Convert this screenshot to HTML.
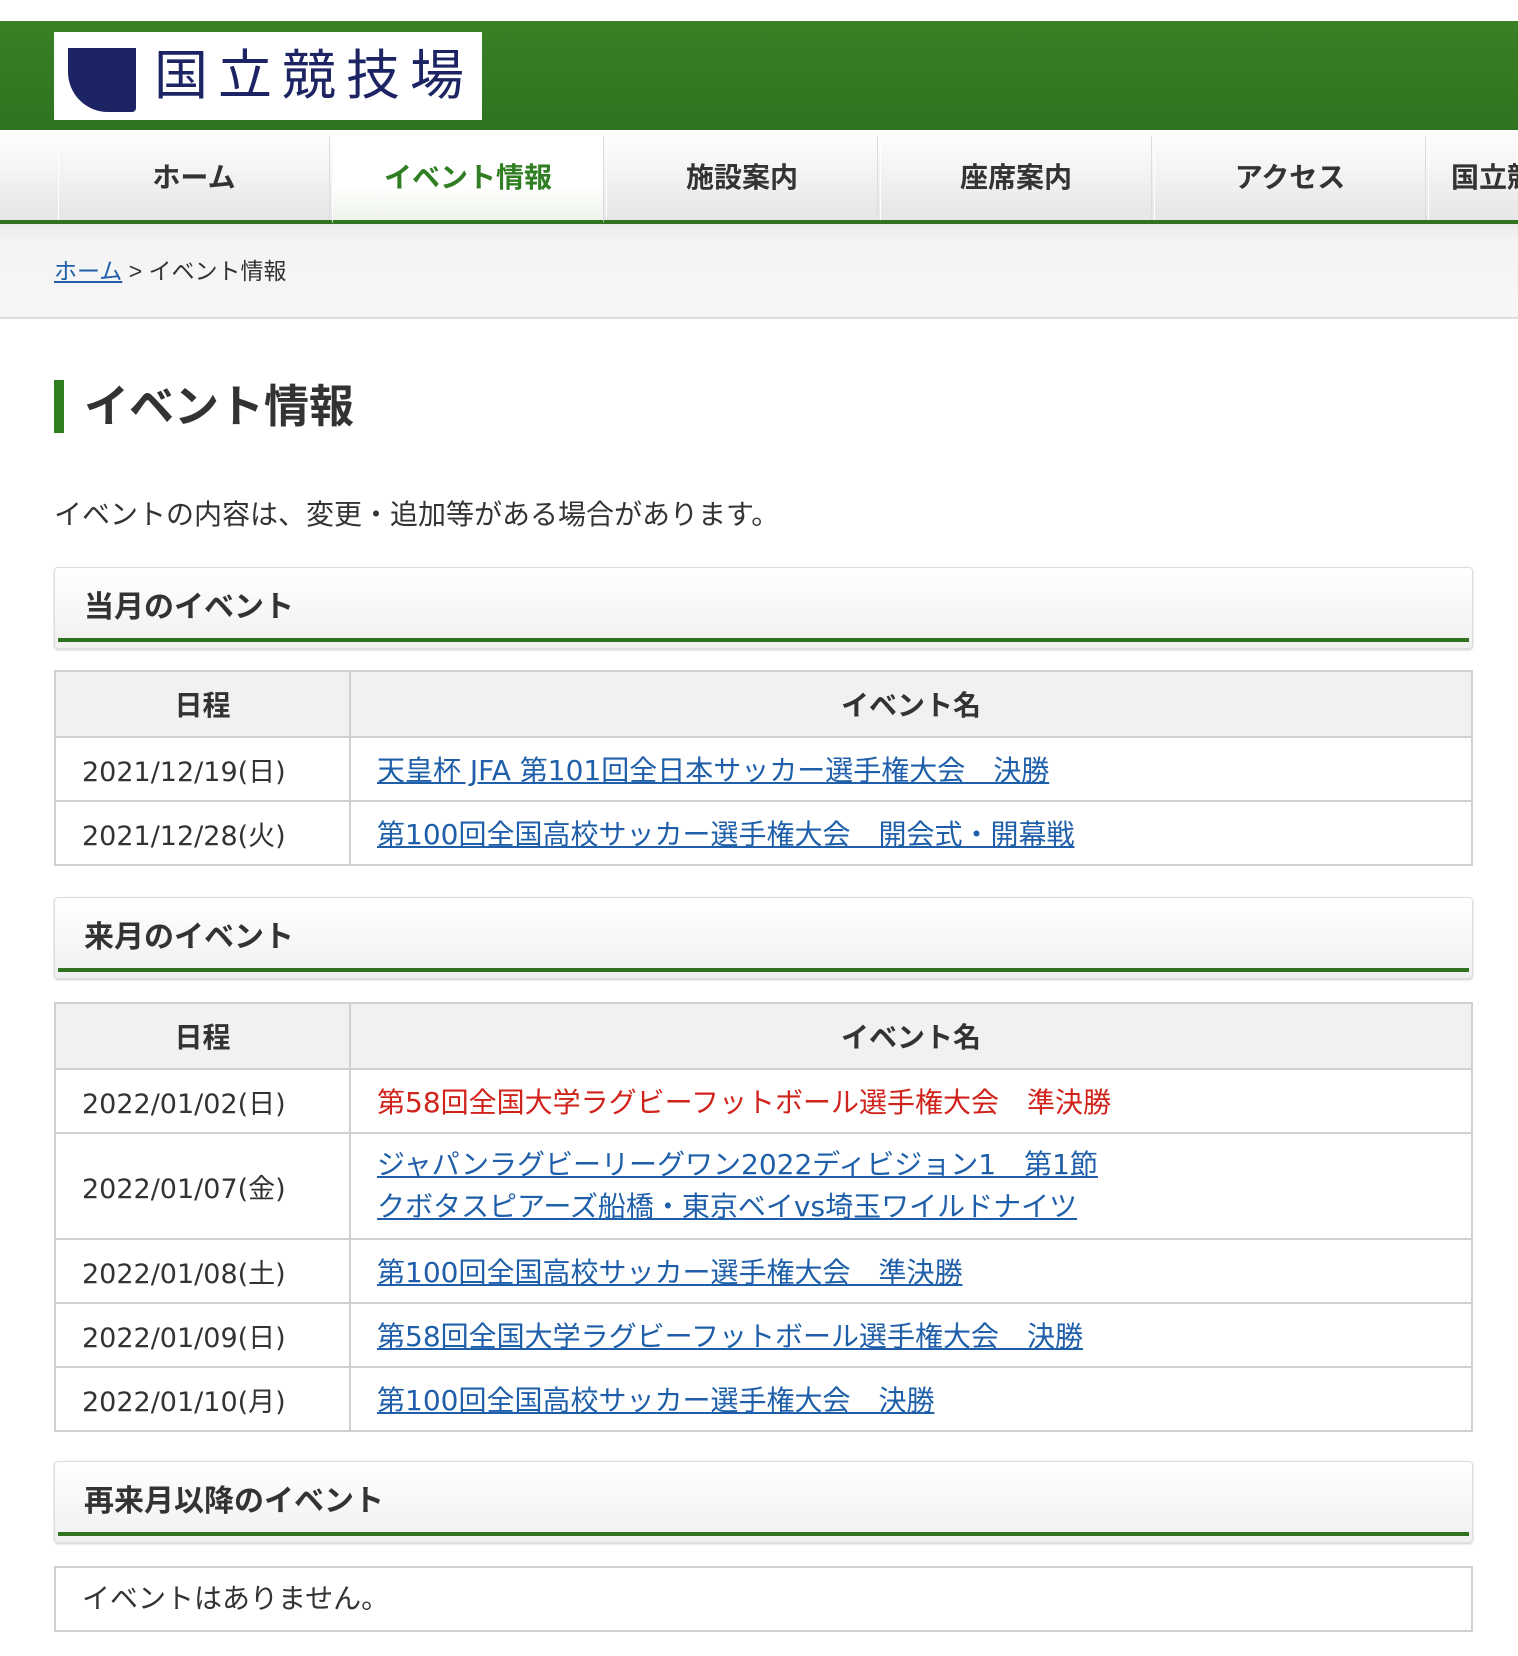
<!DOCTYPE html>
<html><head><meta charset="utf-8"><style>
*{margin:0;padding:0;box-sizing:border-box}
body{width:1518px;height:1656px;background:#fff;font-family:"Liberation Sans","Noto Sans CJK JP",sans-serif;color:#333;overflow:hidden;position:relative}
.hdr{position:absolute;top:21px;left:0;width:1518px;height:109px;background:linear-gradient(#3a8026,#2f7220)}
.logo{position:absolute;left:54px;top:11px;width:428px;height:88px;background:#fff;overflow:hidden}
.logo .sh{position:absolute;left:14px;top:16px;width:68px;height:64px;background:#1c2463;border-radius:0 0 4px 40px}
.logo .tx{position:absolute;left:100px;top:10px;font-size:54px;letter-spacing:10px;color:#1c2463;line-height:68px;white-space:nowrap}
.nav{position:absolute;top:130px;left:0;width:1518px;height:94px;background:linear-gradient(#fff,#e6e6e6);border-bottom:4px solid #2f7220}
.nav div{position:absolute;top:6px;height:84px;width:272px;border-left:1px solid #fff;border-right:1px solid #ddd;text-align:center;line-height:84px;font-size:28px;font-weight:bold;color:#333;white-space:nowrap;overflow:hidden}
.nav div.on{color:#2f7e22;background:linear-gradient(#fff,#fff 60%,#eef3ea);border-bottom:4px solid #2f7220;height:88px}
.bc{position:absolute;top:224px;left:0;width:1518px;height:95px;background:linear-gradient(#ebebeb,#f4f4f4 20%,#f6f6f6);border-bottom:2px solid #ddd;font-size:23px;line-height:95px;padding-left:54px;color:#333}
.bc a{color:#1f5faa}
h1{position:absolute;left:54px;top:380px;height:53px;border-left:10px solid #2f7e22;padding-left:20px;font-size:45px;line-height:53px;font-weight:bold;color:#333}
.intro{position:absolute;left:54px;top:497px;font-size:28px;line-height:36px;white-space:nowrap}
.sec{position:absolute;left:54px;width:1419px;height:82px;border:1px solid #ddd;border-radius:4px;background:linear-gradient(#fff,#f0f0f0);font-size:30px;font-weight:bold;padding-left:29px;line-height:80px;box-shadow:0 1px 2px #ccc}
.sec:after{content:"";position:absolute;left:3px;right:3px;bottom:6px;height:4px;background:#2f7220}
table{position:absolute;left:54px;width:1419px;border-collapse:collapse;font-size:28px;font-family:"DejaVu Sans","Noto Sans CJK JP",sans-serif}
td,th{border:2px solid #d0d0d0;height:64px;padding:0 26px;white-space:nowrap}
th{background:#f1f1f1;font-weight:bold;text-align:center;height:66px;font-family:"Liberation Sans","Noto Sans CJK JP",sans-serif}
td.d{width:295px;text-align:left;color:#333;font-size:27px}
td a{color:#1f5faa}
td.r{color:#d0231b}
.none{position:absolute;left:54px;top:1566px;width:1419px;height:66px;border:2px solid #d0d0d0;font-size:28px;line-height:62px;padding-left:26px}
</style></head><body>
<div class="hdr"><div class="logo"><div class="sh"></div><div class="tx">国立競技場</div></div></div>
<div class="nav">
<div style="left:58px">ホーム</div>
<div class="on" style="left:332px">イベント情報</div>
<div style="left:606px">施設案内</div>
<div style="left:880px">座席案内</div>
<div style="left:1154px">アクセス</div>
<div style="left:1428px;text-align:left;padding-left:22px">国立競技場</div>
</div>
<div class="bc"><a href="#">ホーム</a> &gt; イベント情報</div>
<h1>イベント情報</h1>
<div class="intro">イベントの内容は、変更・追加等がある場合があります。</div>
<div class="sec" style="top:567px">当月のイベント</div>
<table style="top:670px">
<tr><th style="width:295px">日程</th><th>イベント名</th></tr>
<tr><td class="d">2021/12/19(日)</td><td><a href="#">天皇杯 JFA 第101回全日本サッカー選手権大会　決勝</a></td></tr>
<tr><td class="d">2021/12/28(火)</td><td><a href="#">第100回全国高校サッカー選手権大会　開会式・開幕戦</a></td></tr>
</table>
<div class="sec" style="top:897px">来月のイベント</div>
<table style="top:1002px">
<tr><th style="width:295px">日程</th><th>イベント名</th></tr>
<tr><td class="d">2022/01/02(日)</td><td class="r">第58回全国大学ラグビーフットボール選手権大会　準決勝</td></tr>
<tr><td class="d" style="height:106px">2022/01/07(金)</td><td style="line-height:42px"><a href="#">ジャパンラグビーリーグワン2022ディビジョン1　第1節<br>クボタスピアーズ船橋・東京ベイvs埼玉ワイルドナイツ</a></td></tr>
<tr><td class="d">2022/01/08(土)</td><td><a href="#">第100回全国高校サッカー選手権大会　準決勝</a></td></tr>
<tr><td class="d">2022/01/09(日)</td><td><a href="#">第58回全国大学ラグビーフットボール選手権大会　決勝</a></td></tr>
<tr><td class="d">2022/01/10(月)</td><td><a href="#">第100回全国高校サッカー選手権大会　決勝</a></td></tr>
</table>
<div class="sec" style="top:1461px">再来月以降のイベント</div>
<div class="none">イベントはありません。</div>
</body></html>
